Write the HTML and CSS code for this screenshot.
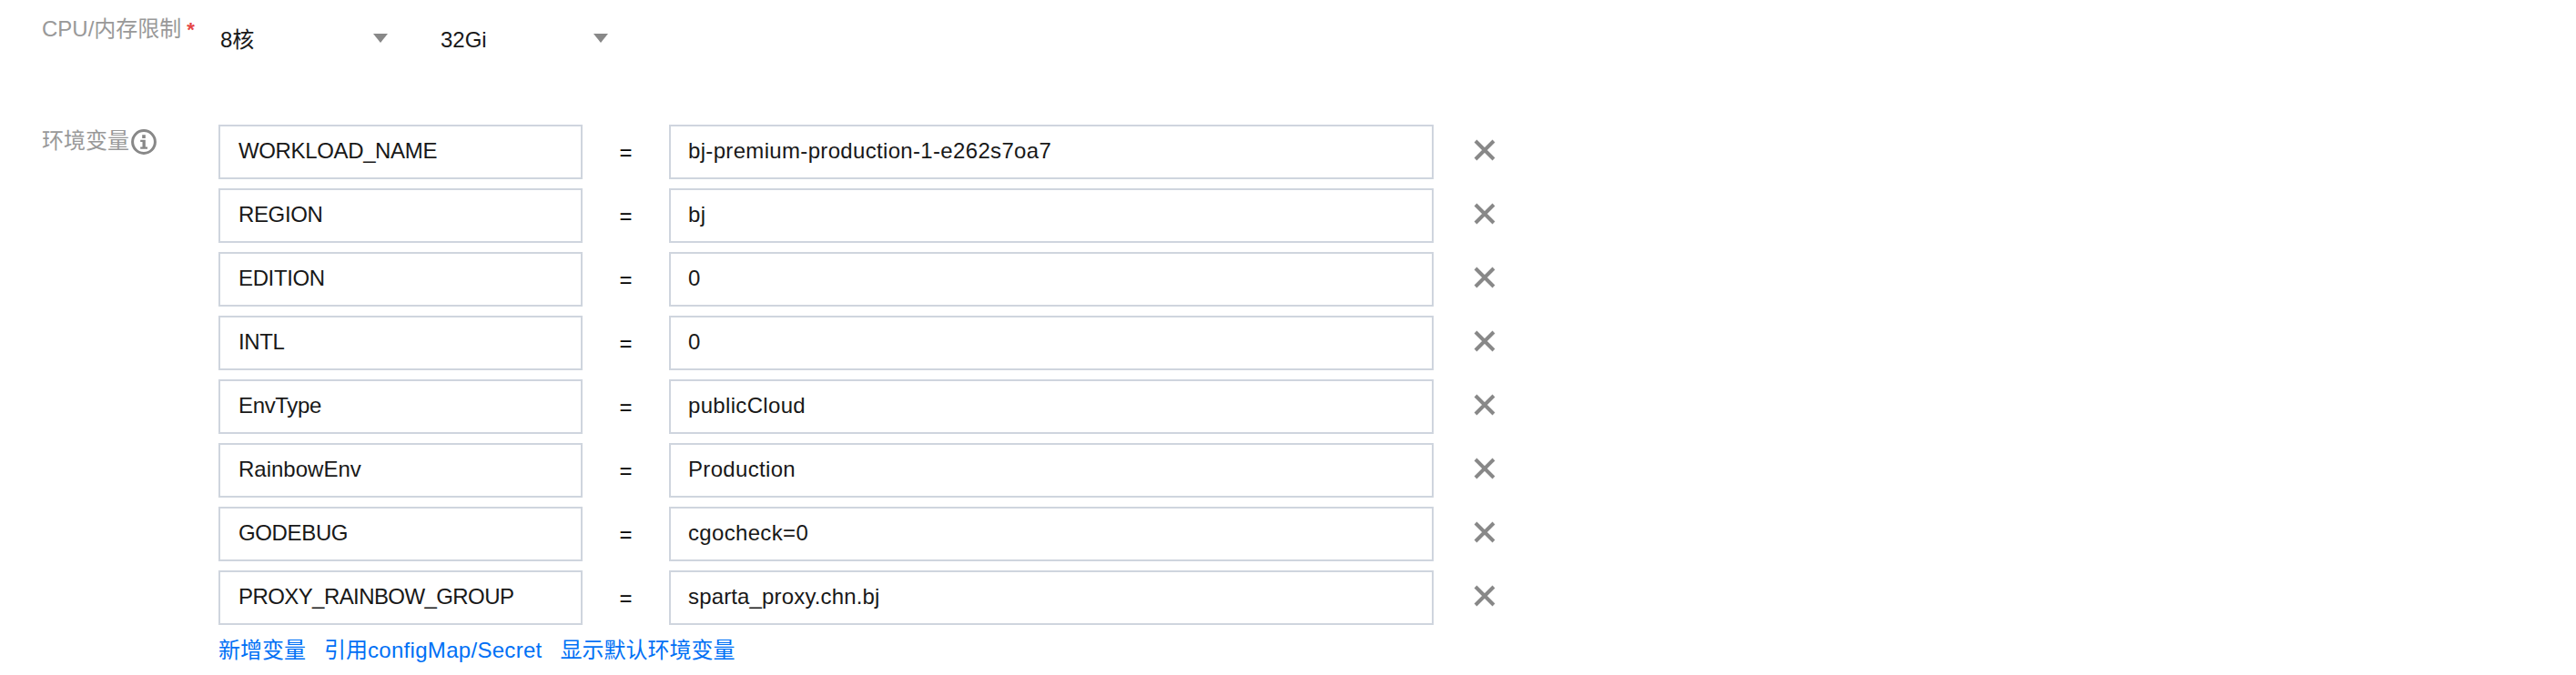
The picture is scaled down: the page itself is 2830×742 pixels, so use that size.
FILE: index.html
```html
<!DOCTYPE html>
<html lang="zh-CN">
<head>
<meta charset="utf-8">
<title>环境变量</title>
<link rel="stylesheet" href="styles.css">
</head>
<body>
<svg class="sprite" aria-hidden="true">
  <symbol id="close" viewBox="0 0 24 24"><path d="M2 2L22 22M22 2L2 22" fill="none" stroke="#888" stroke-width="4"/></symbol>
  <symbol id="arrow" viewBox="0 0 16 10"><path d="M0 0H16L8 10Z" fill="#888"/></symbol>
</svg>
<main class="form">
  <section class="field limits">
    <div class="label">CPU/内存限制<span class="required">*</span></div>
    <div class="selects">
      <div class="select"><span>8核</span><svg class="arrow"><use href="#arrow"/></svg></div>
      <div class="select"><span>32Gi</span><svg class="arrow"><use href="#arrow"/></svg></div>
    </div>
  </section>
  <section class="field">
    <div class="label env-label">环境变量<svg class="info" viewBox="0 0 28 28"><circle cx="14" cy="14" r="12.4" fill="none" stroke="#888" stroke-width="3"/><path d="M12.2 6.3h3.6v3.6h-3.6zM10.2 11.7h5.6v7.8h2.2v2.2H10.2v-2.2h2.3v-5.6h-2.3z" fill="#888"/></svg></div>
    <div class="env">
      <div class="row"><div class="box key caps">WORKLOAD_NAME</div><span class="eq">=</span><div class="box value">bj-premium-production-1-e262s7oa7</div><svg class="close"><use href="#close"/></svg></div>
      <div class="row"><div class="box key caps">REGION</div><span class="eq">=</span><div class="box value">bj</div><svg class="close"><use href="#close"/></svg></div>
      <div class="row"><div class="box key caps">EDITION</div><span class="eq">=</span><div class="box value">0</div><svg class="close"><use href="#close"/></svg></div>
      <div class="row"><div class="box key caps">INTL</div><span class="eq">=</span><div class="box value">0</div><svg class="close"><use href="#close"/></svg></div>
      <div class="row"><div class="box key caps">EnvType</div><span class="eq">=</span><div class="box value">publicCloud</div><svg class="close"><use href="#close"/></svg></div>
      <div class="row"><div class="box key">RainbowEnv</div><span class="eq">=</span><div class="box value">Production</div><svg class="close"><use href="#close"/></svg></div>
      <div class="row"><div class="box key caps">GODEBUG</div><span class="eq">=</span><div class="box value">cgocheck=0</div><svg class="close"><use href="#close"/></svg></div>
      <div class="row"><div class="box key caps tight">PROXY_RAINBOW_GROUP</div><span class="eq">=</span><div class="box value snug">sparta_proxy.chn.bj</div><svg class="close"><use href="#close"/></svg></div>
      <div class="links"><a>新增变量</a><a>引用<span class="latin">configMap/Secret</span></a><a>显示默认环境变量</a></div>
    </div>
  </section>
</main>
</body>
</html>
```

FILE: styles.css
```css
* { box-sizing: border-box; }
body {
  margin: 0;
  background: #fff;
  color: #181818;
  font: 24px/36px "Liberation Sans", "Noto Sans CJK SC", sans-serif;
  font-kerning: normal;
}
.sprite { position: absolute; width: 0; height: 0; }
.form { height: 742px; padding-left: 46px; overflow: hidden; }
.field { display: flex; align-items: flex-start; }
.limits { height: 137px; }
.label { width: 194px; padding-top: 14px; color: #999; white-space: nowrap; }
.required { margin-left: 6px; color: #e54545; font-size: 22px; font-weight: bold; }
.env-label { display: flex; padding-top: 0; }
.info { width: 28px; height: 28px; margin: 5px 0 0 2px; }
.selects { display: flex; padding: 26px 0 0 2px; gap: 58px; }
.select { display: flex; justify-content: space-between; width: 184px; height: 36px; }
.arrow { width: 16px; height: 10px; margin-top: 11px; }
.env { display: flex; flex-direction: column; gap: 10px; }
.row { display: flex; align-items: center; height: 60px; }
.box { height: 60px; padding: 9px 20px; border: 2px solid #cfd5de; white-space: nowrap; }
.key { width: 400px; }
.value { width: 840px; padding-left: 19px; letter-spacing: .33px; }
.caps { letter-spacing: -.36px; }
.tight { letter-spacing: -.58px; }
.snug { letter-spacing: .15px; }
.eq { width: 95px; padding-top: 2px; text-align: center; color: #000; }
.close { width: 24px; height: 24px; margin: 0 0 4px 44px; }
.links { display: flex; gap: 20px; color: #0070f5; }
.latin { letter-spacing: .3px; }
```
